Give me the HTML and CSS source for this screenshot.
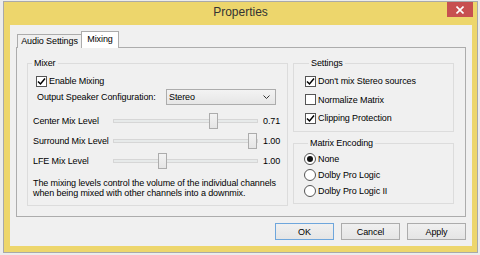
FILE: index.html
```html
<!DOCTYPE html>
<html lang="en">
<head>
  <meta charset="UTF-8">
  <title>Properties</title>
  <link rel="stylesheet" href="styles.css">
</head>
<body>
  <div class="window">
    <div class="titlebar">
      <span></span>
      <div class="title">Properties</div>
      <button class="close" aria-label="Close">
        <svg width="8" height="8" viewBox="0 0 8 8"><path d="M0.5 0.5 L7.5 7.5 M7.5 0.5 L0.5 7.5" stroke="#fff" stroke-width="1.6" fill="none"/></svg>
      </button>
    </div>

    <div class="client">
      <div class="tabs">
        <div class="tab tab-audio">Audio Settings</div>
        <div class="tab tab-active">Mixing</div>
      </div>

      <div class="panel">
        <fieldset class="group mixer">
          <legend>Mixer</legend>
          <div class="check-row enable-row">
            <span class="box"><svg width="9" height="9" viewBox="0 0 9 9"><path d="M1 4.5 L3.5 7 L8 1.5" stroke="#000" stroke-width="1.5" fill="none"/></svg></span>
            <span>Enable Mixing</span>
          </div>
          <div class="output-row">
            <span class="output-label">Output Speaker Configuration:</span>
            <div class="select">
              <span>Stereo</span>
              <svg width="7" height="4" viewBox="0 0 7 4"><path d="M0.5 0.5 L3.5 3.5 L6.5 0.5" stroke="#333" stroke-width="1" fill="none"/></svg>
            </div>
          </div>
          <div class="slider-row first">
            <span class="slider-label">Center Mix Level</span>
            <div class="track"><span class="thumb" style="--v: 0.71"></span></div>
            <span class="value">0.71</span>
          </div>
          <div class="slider-row">
            <span class="slider-label">Surround Mix Level</span>
            <div class="track"><span class="thumb" style="--v: 1"></span></div>
            <span class="value">1.00</span>
          </div>
          <div class="slider-row">
            <span class="slider-label">LFE Mix Level</span>
            <div class="track"><span class="thumb" style="--v: 0.33"></span></div>
            <span class="value">1.00</span>
          </div>
          <p class="note">The mixing levels control the volume of the individual channels<br>when being mixed with other channels into a downmix.</p>
        </fieldset>

        <div class="side">
          <fieldset class="group settings">
            <legend>Settings</legend>
            <div class="check-row r1">
              <span class="box"><svg width="9" height="9" viewBox="0 0 9 9"><path d="M1 4.5 L3.5 7 L8 1.5" stroke="#000" stroke-width="1.5" fill="none"/></svg></span>
              <span>Don't mix Stereo sources</span>
            </div>
            <div class="check-row r2">
              <span class="box"></span>
              <span>Normalize Matrix</span>
            </div>
            <div class="check-row r3">
              <span class="box"><svg width="9" height="9" viewBox="0 0 9 9"><path d="M1 4.5 L3.5 7 L8 1.5" stroke="#000" stroke-width="1.5" fill="none"/></svg></span>
              <span>Clipping Protection</span>
            </div>
          </fieldset>

          <fieldset class="group encoding">
            <legend>Matrix Encoding</legend>
            <div class="radio-row">
              <span class="radio selected"></span>
              <span>None</span>
            </div>
            <div class="radio-row">
              <span class="radio"></span>
              <span>Dolby Pro Logic</span>
            </div>
            <div class="radio-row">
              <span class="radio"></span>
              <span>Dolby Pro Logic II</span>
            </div>
          </fieldset>
        </div>
      </div>

      <div class="buttons">
        <button class="btn btn-default">OK</button>
        <button class="btn">Cancel</button>
        <button class="btn">Apply</button>
      </div>
    </div>
  </div>
</body>
</html>
```

FILE: styles.css
```css
body {
  margin: 0;
  background: #ececec;
  font-family: "Liberation Sans", Arial, sans-serif;
  font-size: 9px;
  letter-spacing: -0.1px;
  color: #000;
}

.window {
  margin: 1px 0 0 3px;
  width: 475px;
  height: 252px;
  box-sizing: border-box;
  border: 1px solid #a9a9a9;
  background: #edd66c;
  display: flex;
  flex-direction: column;
}

.titlebar {
  height: 23px;
  flex: none;
  display: grid;
  grid-template-columns: 1fr auto 1fr;
  align-items: start;
}

.title {
  font-size: 12px;
  letter-spacing: 0;
  line-height: 21px;
  color: #333;
}

.close {
  justify-self: end;
  margin-right: 4px;
  width: 26px;
  height: 15px;
  padding: 0;
  border: none;
  background: #c75050;
  display: flex;
  align-items: center;
  justify-content: center;
}

.client {
  flex: none;
  height: 221px;
  margin: 0 5px 0 6px;
  padding: 6px 0 0 6px;
  box-sizing: border-box;
  background: #f0f0f0;
}

/* tabs */
.tabs {
  display: flex;
  align-items: flex-end;
  height: 17px;
  margin-bottom: -1px;
  padding-left: 1px;
  position: relative;
  z-index: 1;
}

.tab {
  box-sizing: border-box;
  height: 14px;
  border: 1px solid #acacac;
  border-bottom: none;
  background: #f0f0f0;
  text-align: center;
  line-height: 13px;
}

.tab-audio {
  width: 65px;
}

.tab-active {
  width: 38px;
  height: 17px;
  margin-left: -1px;
  background: #fff;
  line-height: 15px;
}

.panel {
  width: 450px;
  height: 170px;
  box-sizing: border-box;
  border: 1px solid #acacac;
  background: #f0f0f0;
  padding: 9px 0 0 10px;
  display: grid;
  grid-template-columns: 261px 161px;
  column-gap: 5px;
  align-items: start;
}

/* group boxes */
.group {
  margin: 0;
  padding: 0;
  min-width: 0;
  box-sizing: border-box;
  border: 1px solid #dcdcdc;
}

.group legend {
  margin-left: 4px;
  padding: 0 2px;
  height: 12px;
  line-height: 12px;
}

.mixer {
  height: 149px;
  padding-top: 5px;
}

.side {
  display: flex;
  flex-direction: column;
  gap: 5px;
}

.settings {
  height: 75px;
  padding: 3px 0 0 11px;
}

.encoding {
  height: 67px;
  padding: 2px 0 0 10px;
}

/* checkboxes and radios */
.check-row,
.radio-row {
  display: flex;
  align-items: center;
  gap: 2px;
}

.enable-row {
  height: 14px;
  padding-left: 8px;
}

.settings .r1 { height: 18px; }
.settings .r2 { height: 19px; }
.settings .r3 { height: 18px; }

.box {
  width: 11px;
  height: 11px;
  box-sizing: border-box;
  border: 1px solid #555;
  background: #fff;
  display: flex;
  align-items: center;
  justify-content: center;
}

.radio-row {
  height: 16px;
}

.radio {
  width: 12px;
  height: 12px;
  box-sizing: border-box;
  border: 1px solid #555;
  border-radius: 50%;
  background: #fff;
  display: flex;
  align-items: center;
  justify-content: center;
}

.radio.selected::after {
  content: "";
  width: 6px;
  height: 6px;
  border-radius: 50%;
  background: #111;
}

/* mixer rows */
.output-row {
  margin-top: 1px;
  height: 16px;
  padding-left: 9px;
  display: flex;
  align-items: center;
}

.output-label {
  width: 129px;
  flex: none;
}

.select {
  width: 110px;
  height: 16px;
  box-sizing: border-box;
  border: 1px solid #acacac;
  background: linear-gradient(#f3f3f3, #e6e6e6);
  padding: 0 5px 0 2px;
  display: flex;
  align-items: center;
  justify-content: space-between;
}

.slider-row {
  height: 20px;
  padding-left: 5px;
  display: flex;
  align-items: center;
}

.slider-row.first {
  margin-top: 6px;
}

.slider-label {
  width: 80px;
  flex: none;
}

.track {
  position: relative;
  width: 145px;
  height: 4px;
  box-sizing: border-box;
  border: 1px solid #d6d6d6;
  background: #e7eaea;
}

.thumb {
  position: absolute;
  top: -7px;
  left: calc((100% - 9px) * var(--v));
  width: 9px;
  height: 16px;
  box-sizing: border-box;
  border: 1px solid #acacac;
  background: linear-gradient(#f3f3f3, #e5e5e5);
}

.value {
  margin-left: 5px;
}

.note {
  margin: 7px 0 0;
  padding-left: 5px;
  line-height: 10px;
}

/* dialog buttons */
.buttons {
  margin-top: 6px;
  padding-right: 6px;
  display: flex;
  justify-content: flex-end;
  gap: 7px;
}

.btn {
  width: 59px;
  height: 17px;
  padding: 0;
  border: 1px solid #acacac;
  background: linear-gradient(#f0f0f0, #e5e5e5);
  font-family: inherit;
  font-size: 9px;
  letter-spacing: -0.1px;
  color: #000;
}

.btn-default {
  border-color: #6ea6dc;
}
```
